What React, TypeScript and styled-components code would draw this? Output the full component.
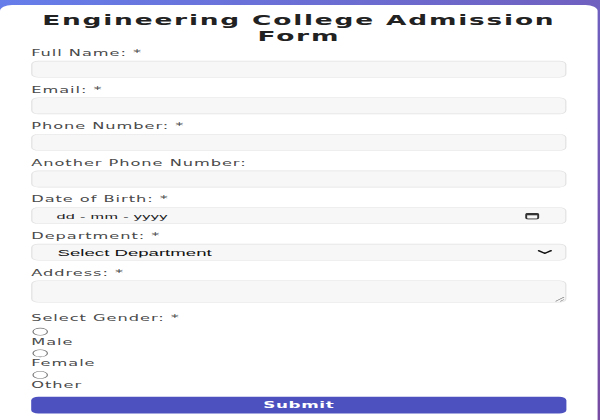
import React from "react";
import styled, { createGlobalStyle } from "styled-components";

const GlobalStyle = createGlobalStyle`
  html, body {
    margin: 0;
    padding: 0;
    height: 100%;
  }
  body {
    background: linear-gradient(135deg, #667eea 0%, #764ba2 100%);
    overflow: hidden;
    font-family: "DejaVu Sans", "Noto Sans", sans-serif;
  }
`;

/* The captured page is shown stretched wide and squashed low; the stage reproduces that view. */
const Stage = styled.div`
  width: 500px;
  height: 700px;
  transform: scale(1.2, 0.6);
  transform-origin: 0 0;
`;

const Card = styled.form`
  box-sizing: border-box;
  width: 498px;
  min-height: 760px;
  margin-top: 5px;
  padding: 14px 26px 0;
  background: #ffffff;
  border-radius: 10px;
`;

const Title = styled.h1`
  margin: 0 0 5px;
  font-family: "DejaVu Sans", sans-serif;
  font-size: 22px;
  line-height: 26px;
  letter-spacing: 1.5px;
  font-weight: 700;
  color: #222222;
  text-align: center;
`;

const Field = styled.div<{ $gap?: number }>`
  display: flex;
  flex-direction: column;
  margin-bottom: ${(p) => p.$gap ?? 11}px;
`;

const Label = styled.label`
  display: block;
  margin-bottom: 4px;
  font-size: 13.5px;
  line-height: 18px;
  letter-spacing: 0.8px;
  color: #4a4a4a;
`;

const boxBase = `
  box-sizing: border-box;
  width: 100%;
  background: #f7f7f7;
  border: 1px solid #e2e2e2;
  border-radius: 6px;
`;

const Input = styled.input`
  ${boxBase}
  display: block;
  height: 28px;
  padding: 0 12px;
  font-size: 14px;
  outline: none;
`;

const TextArea = styled.textarea`
  ${boxBase}
  display: block;
  height: 37px;
  padding: 6px 12px;
  resize: vertical;
  font-size: 14px;
  outline: none;
`;

const FakeControl = styled.div<{ $padLeft: number; $padRight: number }>`
  ${boxBase}
  display: flex;
  align-items: center;
  justify-content: space-between;
  height: 28px;
  padding: 0 ${(p) => p.$padRight}px 0 ${(p) => p.$padLeft}px;
`;

const DateText = styled.span`
  font-family: "Liberation Sans", Arial, sans-serif;
  font-size: 13.5px;
  letter-spacing: 0.3px;
  color: #1d1d1f;
`;

const Select = styled.select`
  flex: 1;
  height: 26px;
  padding: 0 0 0 22px;
  margin-left: -1px;
  border: none;
  background: transparent;
  appearance: none;
  font-family: "Liberation Sans", Arial, sans-serif;
  font-size: 15.5px;
  color: #111111;
  outline: none;
`;

const SelectBox = styled.div`
  ${boxBase}
  display: flex;
  align-items: center;
  height: 28px;
  padding-right: 11px;
`;

const Options = styled.div`
  display: flex;
  flex-direction: column;
`;

const Option = styled.label`
  display: block;
  font-size: 13.5px;
  line-height: 20px;
  letter-spacing: 0.8px;
  color: #4a4a4a;
`;

const Radio = styled.input`
  display: block;
  appearance: none;
  box-sizing: border-box;
  width: 13px;
  height: 13px;
  margin: 3px 0 0 1px;
  border: 1px solid #767676;
  border-radius: 50%;
  background: #ffffff;
`;

const SubmitButton = styled.button`
  display: block;
  width: 100%;
  height: 28px;
  margin-top: 10px;
  border: none;
  border-radius: 6px;
  background: #4c51bf;
  color: #ffffff;
  font-family: "DejaVu Sans", sans-serif;
  font-size: 14px;
  font-weight: 700;
  letter-spacing: 0.5px;
  cursor: pointer;
`;

const CalendarIcon = () => (
  <svg width="13" height="13" viewBox="0 0 13 13" aria-hidden="true">
    <rect x="1.5" y="2.5" width="10" height="9" rx="1.5" fill="none" stroke="#333" strokeWidth="1.6" />
    <rect x="1.5" y="2.5" width="10" height="3" fill="#333" />
  </svg>
);

const Chevron = () => (
  <svg width="12" height="8" viewBox="0 0 12 8" aria-hidden="true">
    <path d="M1 1.5 L6 6 L11 1.5" fill="none" stroke="#111" strokeWidth="2" strokeLinecap="round" strokeLinejoin="round" />
  </svg>
);

const textFields = [
  { id: "fullName", label: "Full Name: *", type: "text" },
  { id: "email", label: "Email: *", type: "email" },
  { id: "phone", label: "Phone Number: *", type: "tel" },
  { id: "phone2", label: "Another Phone Number:", type: "tel" },
];

export default function App() {
  return (
    <>
      <GlobalStyle />
      <Stage>
        <Card onSubmit={(e) => e.preventDefault()}>
          <Title>
            Engineering College Admission
            <br />
            Form
          </Title>

          {textFields.map((f) => (
            <Field key={f.id}>
              <Label htmlFor={f.id}>{f.label}</Label>
              <Input id={f.id} type={f.type} />
            </Field>
          ))}

          <Field>
            <Label>Date of Birth: *</Label>
            <FakeControl $padLeft={20} $padRight={21}>
              <DateText>dd - mm - yyyy</DateText>
              <CalendarIcon />
            </FakeControl>
          </Field>

          <Field>
            <Label htmlFor="dept">Department: *</Label>
            <SelectBox>
              <Select id="dept" defaultValue="">
                <option value="">Select Department</option>
                <option value="cse">Computer Science</option>
                <option value="ece">Electronics</option>
                <option value="me">Mechanical</option>
              </Select>
              <Chevron />
            </SelectBox>
          </Field>

          <Field $gap={17}>
            <Label htmlFor="address">Address: *</Label>
            <TextArea id="address" />
          </Field>

          <Label>Select Gender: *</Label>
          <Options>
            {["Male", "Female", "Other"].map((g) => (
              <Option key={g}>
                <Radio type="radio" name="gender" value={g} />
                {g}
              </Option>
            ))}
          </Options>

          <SubmitButton type="submit">Submit</SubmitButton>
        </Card>
      </Stage>
    </>
  );
}
